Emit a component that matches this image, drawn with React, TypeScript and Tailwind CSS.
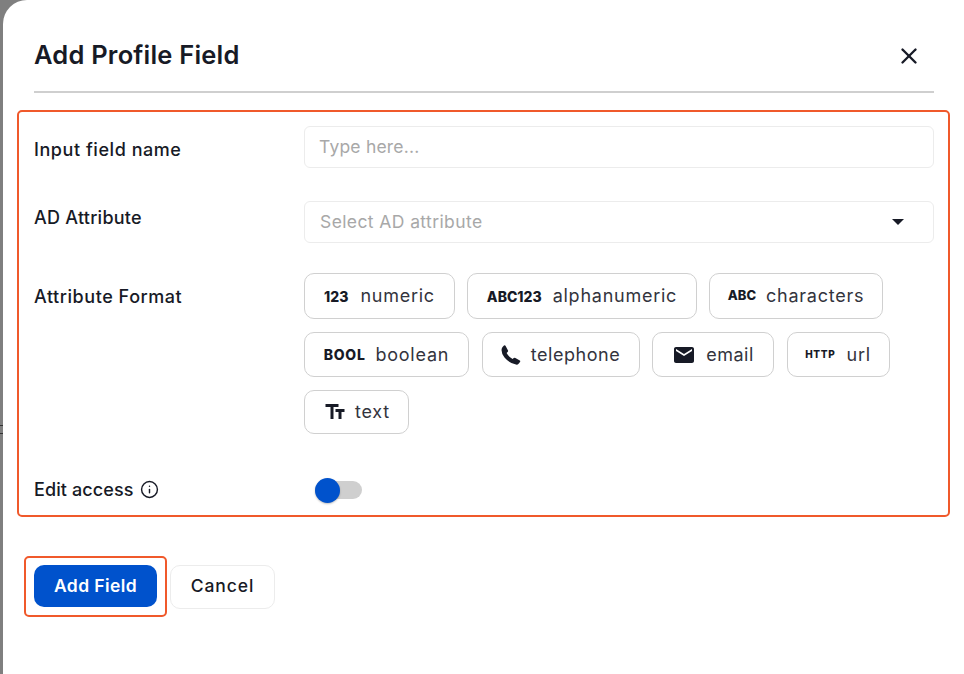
import React from "react";
import { MdEmail, MdTextFields } from "react-icons/md";
import { X, Info } from "lucide-react";

const font = { fontFamily: '"Inter", "Noto Sans", sans-serif' };

function Chip({ w, h, icon, label, gap = "gap-3", labelCls = "", tracking = "tracking-[0.75px]" }: { w: string; h: string; icon: React.ReactNode; label: string; gap?: string; labelCls?: string; tracking?: string }) {
  return (
    <button className={`flex items-center justify-center ${w} ${h} ${gap} ${tracking} rounded-[10px] border border-[#d0d0d0] bg-white text-[18px] text-[#33343d]`}>
      {icon}
      <span className={labelCls}>{label}</span>
    </button>
  );
}

function Code({ children, cls = "text-[14px] tracking-normal" }: { children: React.ReactNode; cls?: string }) {
  return <span className={`${cls} font-extrabold text-[#171a26]`}>{children}</span>;
}

function Phone() {
  return (
    <svg width="20" height="20" viewBox="0 0 20 20" className="text-[#171a26]" fill="currentColor">
      <path d="M4.5 0.8 L7 5.5 Q7.4 6.4 6.6 7.1 L5.6 8 Q7.5 11.6 11.6 14 L12.8 13 Q13.6 12.4 14.4 12.9 L18.8 15.6 Q19.6 16.2 19 17.1 L17.6 18.8 Q16.6 19.9 15 19.6 Q8 18 3.5 12.6 Q0.6 9 0.5 5 Q0.6 2.8 2 1.4 L3 0.6 Q4 0 4.5 0.8 Z" />
    </svg>
  );
}

export default function App() {
  return (
    <div className="relative h-[674px] w-[964px] overflow-hidden bg-[#7f7f7f] pl-[3px]" style={font}>
      <span className="absolute left-0 top-[425px] h-px w-[3px] bg-[#333333]" />
      <span className="absolute left-0 top-[433px] h-px w-[3px] bg-[#333333]" />
      <div className="flex h-full flex-col rounded-tl-[24px] bg-white text-[#171a26]">
        <div className="ml-[31px] mr-[30px] flex h-[93px] items-center justify-between border-b-2 border-[#cfcfcf] pt-[25px] pb-[6px]">
          <h1 className="text-[25.5px] font-semibold leading-none tracking-[0.2px]">Add Profile Field</h1>
          <X size={26} strokeWidth={2.2} className="mr-[12px] mt-[1px] text-[#171a26]" />
        </div>

        <div className="ml-[14px] mr-[14px] mt-[17px] h-[407px] rounded-[5px] border-2 border-[#f0592b] pl-[15px] pr-[14px] pt-[14px]">
          <div className="flex h-[42px] items-center">
            <label className="mt-[4px] w-[270px] text-[18px] font-medium tracking-[0.55px]">Input field name</label>
            <input
              placeholder="Type here..."
              className="h-[42px] w-[630px] rounded-[6px] border border-[#ececec] bg-white pb-[2px] pl-[14px] pr-[15px] text-[17.5px] tracking-[0.2px] outline-none placeholder:text-[#a8a8a8]"
            />
          </div>

          <div className="mt-[33px] flex h-[42px] items-start">
            <label className="mt-[3px] w-[270px] text-[18px] font-medium tracking-[0.25px]">AD Attribute</label>
            <div className="flex h-[42px] w-[630px] items-center justify-between rounded-[6px] border border-[#ececec] bg-white pl-[15px] pr-[29px] text-[17.5px] tracking-[0.4px] text-[#a8a8a8]">
              <span>Select AD attribute</span>
              <span className="h-0 w-0 border-x-[6.5px] border-t-[6.5px] border-x-transparent border-t-[#171a26]" />
            </div>
          </div>

          <div className="mt-[30px] flex items-start">
            <label className="mt-[10px] w-[270px] text-[18px] font-medium tracking-[0.55px]">Attribute Format</label>
            <div className="flex w-[630px] flex-col gap-[13px]">
              <div className="flex gap-[12px]">
                <Chip w="w-[151px]" h="h-[46px]" icon={<Code>123</Code>} label="numeric" labelCls="pb-[2px]" />
                <Chip w="w-[230px]" h="h-[46px]" icon={<Code>ABC123</Code>} label="alphanumeric" labelCls="pb-[2px]" gap="gap-[11px]" />
                <Chip w="w-[174px]" h="h-[46px]" icon={<Code cls="text-[13px] tracking-normal">ABC</Code>} label="characters" labelCls="pb-[2px]" gap="gap-[10px]" />
              </div>
              <div className="flex gap-[12.5px]">
                <Chip w="w-[165px]" h="h-[45px]" icon={<Code cls="text-[14px] tracking-[0.7px]">BOOL</Code>} label="boolean" gap="gap-[10px]" />
                <Chip w="w-[158px]" h="h-[45px]" icon={<Phone />} label="telephone" gap="gap-[10px]" tracking="tracking-[0.55px]" />
                <Chip w="w-[122px]" h="h-[45px]" icon={<MdEmail size={24} className="text-[#171a26]" />} label="email" gap="gap-[10px]" tracking="tracking-[0.5px]" />
                <Chip w="w-[103px]" h="h-[45px]" icon={<Code cls="text-[10px] tracking-[0.7px]">HTTP</Code>} label="url" gap="gap-[11px]" />
              </div>
              <div className="flex">
                <Chip w="w-[105px]" h="h-[44px]" icon={<MdTextFields size={24} className="text-[#171a26]" />} label="text" labelCls="pb-[2px]" gap="gap-[8px]" />
              </div>
            </div>
          </div>

          <div className="mt-[41px] flex h-[28px] items-center">
            <div className="flex w-[281px] items-center gap-[6px]">
              <span className="text-[18px] font-medium tracking-[0.1px]">Edit access</span>
              <Info size={19} strokeWidth={1.8} />
            </div>
            <div className="relative mt-[2px] h-[18px] w-[47px] rounded-full bg-[#cfcfcf]">
              <span className="absolute left-0 top-[-3.5px] h-[25px] w-[25px] rounded-full bg-[#0052cc] shadow-[0_1px_2px_rgba(0,0,0,0.25)]" />
            </div>
          </div>
        </div>

        <div className="ml-[21px] mt-[39px] flex items-center gap-[3px]">
          <div className="rounded-[5px] border-2 border-[#f0592b] px-[8px] pt-[7px] pb-[8px]">
            <button className="h-[42px] w-[123px] rounded-[10px] bg-[#0052cc] text-[17.5px] font-semibold tracking-[0.4px] text-white">Add Field</button>
          </div>
          <button className="h-[44px] w-[105px] rounded-[10px] border border-[#ececec] bg-white text-[17.5px] font-medium tracking-[0.9px] text-[#171a26]">Cancel</button>
        </div>
      </div>
    </div>
  );
}
